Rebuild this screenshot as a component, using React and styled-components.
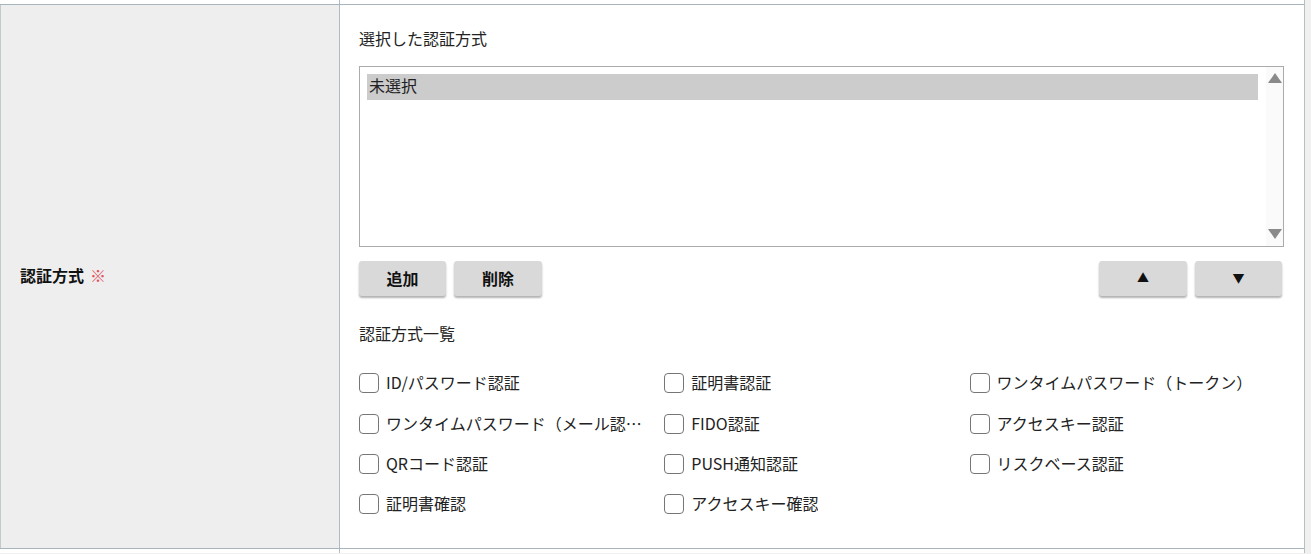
import React from "react";
import styled, { createGlobalStyle } from "styled-components";

const methods = [
  "ID/パスワード認証",
  "証明書認証",
  "ワンタイムパスワード（トークン）",
  "ワンタイムパスワード（メール認証）",
  "FIDO認証",
  "アクセスキー認証",
  "QRコード認証",
  "PUSH通知認証",
  "リスクベース認証",
  "証明書確認",
  "アクセスキー確認",
];

const GlobalStyle = createGlobalStyle`
  body {
    margin: 0;
    background: #f0f0f0;
    font-family: "Noto Sans CJK JP", "Noto Sans", sans-serif;
    color: #222;
  }
`;

const Table = styled.div`
  width: 1304px;
  background: #fff;
  border-right: 1px solid #b9bec2;
`;

const Row = styled.div`
  display: grid;
  grid-template-columns: 340px 1fr;
  height: ${(p) => p.height || "auto"};
  border-top: ${(p) => (p.lined ? "1px solid #a9b5bd" : "none")};
`;

const LabelCell = styled.div`
  display: flex;
  align-items: center;
  padding: 0 0 3px 19px;
  background: ${(p) => (p.blank ? "#fff" : "#eeeeee")};
  border-right: 1px solid #b3bbc0;
  border-left: ${(p) => (p.blank ? "none" : "1px solid #c4c9cc")};
  font-size: 16px;
  font-weight: 700;
  color: #111;
`;

const Required = styled.span`
  margin-left: 6px;
  color: #e2505d;
  font-weight: 400;
`;

const ValueCell = styled.div`
  padding: 21px 20px 23px 19px;
  display: flex;
  flex-direction: column;
`;

const Caption = styled.div`
  font-size: 16px;
  line-height: 24px;
  margin-top: ${(p) => p.top || 0}px;
`;

const ListBox = styled.div`
  margin-top: 16px;
  height: 181px;
  box-sizing: border-box;
  border: 1px solid #ababab;
  display: grid;
  grid-template-columns: 1fr 17px;
`;

const Options = styled.div`
  padding: 7px 8px 7px 7px;
`;

const Option = styled.div`
  height: 26px;
  line-height: 22px;
  padding-left: 2px;
  background: ${(p) => (p.selected ? "#cccccc" : "transparent")};
  font-size: 16px;
  color: #222;
`;

const ScrollTrack = styled.div`
  background: #fafafa;
  display: flex;
  flex-direction: column;
  justify-content: space-between;
  align-items: center;
  padding: 6px 0 7px;
`;

const Arrow = ({ down }) => (
  <svg width="14" height="10" viewBox="0 0 14 10">
    <polygon points={down ? "0,0 14,0 7,10" : "7,0 14,10 0,10"} fill="#8a8a8a" />
  </svg>
);

const ButtonBar = styled.div`
  margin-top: 14px;
  display: flex;
  justify-content: space-between;
  padding-right: 2px;
`;

const ButtonGroup = styled.div`
  display: flex;
  gap: 8px;
`;

const Button = styled.button`
  width: ${(p) => p.w || 87}px;
  height: 35px;
  border: none;
  border-radius: 3px;
  background: #d9d9d9;
  box-shadow: 0 2px 2px rgba(0, 0, 0, 0.3);
  font-family: inherit;
  font-size: ${(p) => (p.small ? 12 : 16)}px;
  font-weight: 700;
  line-height: 1;
  color: #111;
  padding: 0 0 2px;
  cursor: pointer;
`;

const CheckGrid = styled.div`
  margin-top: 18px;
  display: grid;
  grid-template-columns: repeat(3, 33%);
  grid-auto-rows: 40.4px;
`;

const CheckItem = styled.label`
  display: flex;
  align-items: center;
  gap: 7px;
  padding-right: 15px;
  min-width: 0;
  font-size: 16px;
  color: #222;
`;

const Box = styled.input`
  appearance: none;
  flex: none;
  margin: 0;
  width: 20px;
  height: 20px;
  box-sizing: border-box;
  border: 1px solid #767676;
  border-radius: 4px;
  background: #fff;
`;

const CheckText = styled.span`
  white-space: nowrap;
  overflow: hidden;
  text-overflow: ellipsis;
  line-height: 22px;
  padding-bottom: 2px;
`;

export default function App() {
  return (
    <>
      <GlobalStyle />
      <Table>
        <Row height="4px">
          <LabelCell blank />
          <div />
        </Row>
        <Row lined>
          <LabelCell>
            認証方式<Required>※</Required>
          </LabelCell>
          <ValueCell>
            <Caption>選択した認証方式</Caption>
            <ListBox>
              <Options>
                <Option selected>未選択</Option>
              </Options>
              <ScrollTrack>
                <Arrow />
                <Arrow down />
              </ScrollTrack>
            </ListBox>
            <ButtonBar>
              <ButtonGroup>
                <Button>追加</Button>
                <Button w={88}>削除</Button>
              </ButtonGroup>
              <ButtonGroup>
                <Button w={88} small>▲</Button>
                <Button small>▼</Button>
              </ButtonGroup>
            </ButtonBar>
            <Caption top={25}>認証方式一覧</Caption>
            <CheckGrid>
              {methods.map((m) => (
                <CheckItem key={m}>
                  <Box type="checkbox" />
                  <CheckText>{m}</CheckText>
                </CheckItem>
              ))}
            </CheckGrid>
          </ValueCell>
        </Row>
        <Row lined height="4px">
          <LabelCell blank />
          <div />
        </Row>
      </Table>
    </>
  );
}
